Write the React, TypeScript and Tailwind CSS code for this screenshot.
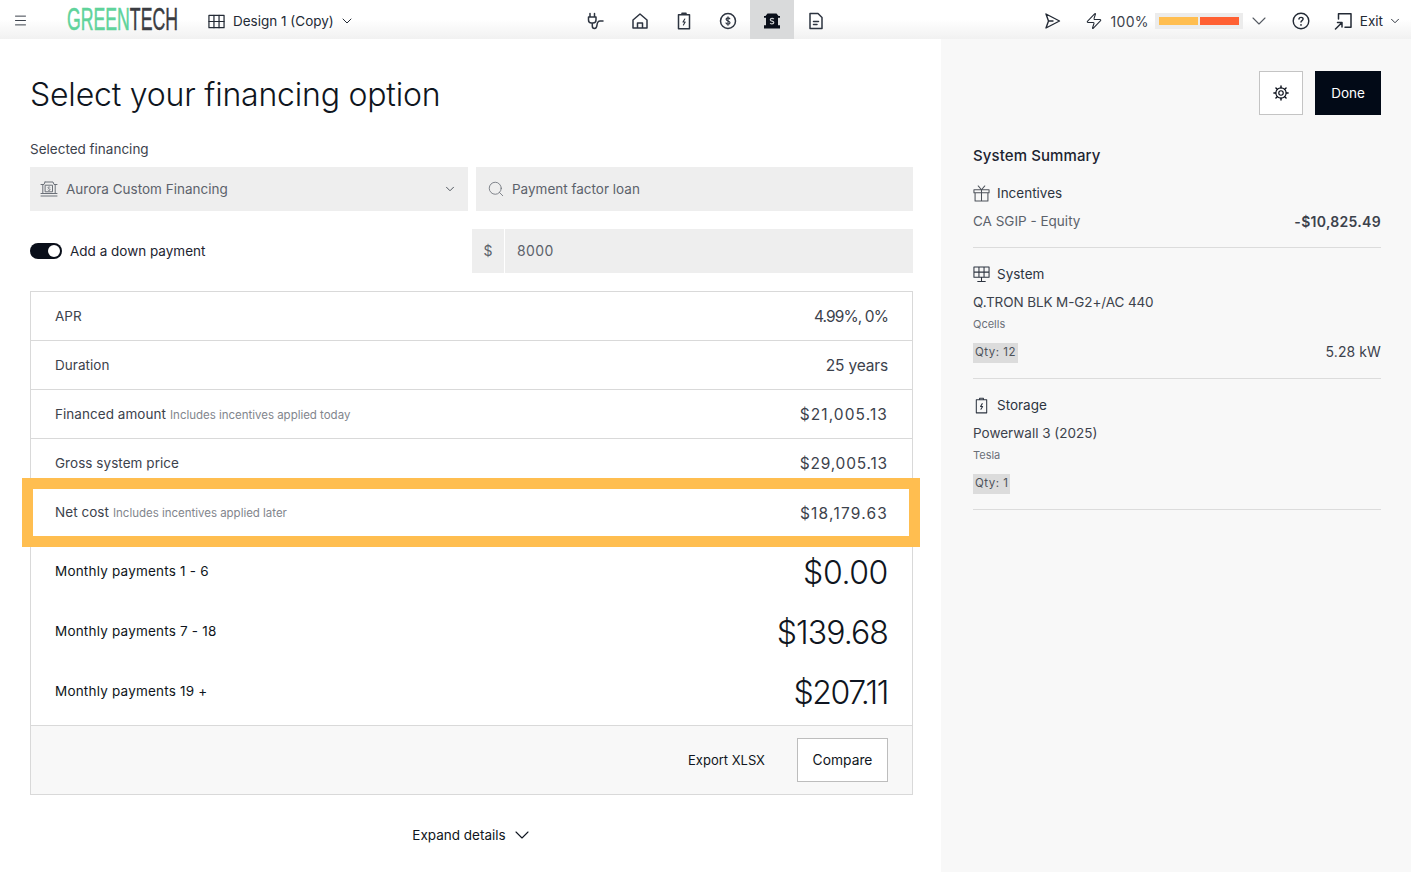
import React from "react";
import { Menu, ChevronDown, Search, Zap } from "lucide-react";

const C = "#0a0f1a";

function Ico({ children, size = 18, className = "" }: { children: React.ReactNode; size?: number; className?: string }) {
  return (
    <svg width={size} height={size} viewBox="0 0 18 18" fill="none" stroke="currentColor" strokeWidth="1.2" strokeLinecap="round" strokeLinejoin="round" className={`shrink-0 ${className}`}>
      {children}
    </svg>
  );
}
const Grid = ({ size = 18 }: { size?: number }) => (
  <Ico size={size}><rect x="1" y="2.500" width="16" height="13" strokeWidth="1.300" /><path d="M1 9h16M6.300 2.500v13M11.700 2.500v13" strokeWidth="1.300" /></Ico>
);
const Plug = () => (
  <Ico><path d="M3 1.500v3.500M7.500 1.500v3.500M1.500 5h7.500v3a3 3 0 0 1-3 3H4.500a3 3 0 0 1-3-3zM5.300 11v3c0 1.500 1 2.500 2.200 2.500S9.800 15 10 13c.3-2.500 1.200-4 3-4h3" strokeWidth="1.500" /></Ico>
);
const Home = () => (
  <Ico><path d="M2 8 9 2l7 6v8H2zM6.500 16v-5h5v5" strokeWidth="1.500" /></Ico>
);
const Battery = ({ size = 18, w = 1.500 }: { size?: number; w?: number }) => (
  <Ico size={size}><path d="M7 2.800V1.300h4v1.500M3.500 2.800h11v14h-11z" strokeWidth={w} /><path d="M9.800 7 8 10h2.200l-1.800 3" strokeWidth="1.100" /></Ico>
);
const Dollar = () => (
  <Ico><circle cx="9" cy="9" r="7.500" strokeWidth="1.500" /><path d="M10.800 6.800C10.400 6 9.800 5.800 9 5.800c-1 0-1.900.5-1.900 1.500 0 2.100 3.900 1.200 3.900 3.400 0 1-.9 1.500-2 1.500-.9 0-1.600-.4-2-1.200M9 4.800v8.400" strokeWidth="1.200" /></Ico>
);
const BankSolid = () => (
  <svg width="18" height="18" viewBox="0 0 18 18">
    <path d="M4.500 1.500h9L15.500 4H17v1.800h-2v7.400h2V16.500H1v-3.300h2V5.800H1V4h1.500z" fill={C} />
    <path d="M10.800 7.200C10.400 6.600 9.800 6.400 9 6.400c-1 0-1.700.5-1.700 1.300 0 1.800 3.500 1.100 3.500 2.900 0 .8-.8 1.300-1.800 1.300-.8 0-1.400-.3-1.800-.9" stroke="#c8cacc" strokeWidth="1.200" fill="none" />
  </svg>
);
const Bank = () => (
  <Ico size={18} className="text-[#6b7078]">
    <path d="M5 2h8l1 2.500h3M5 2 4 4.500H1M2.800 4.500v9M15.200 4.500v9M1 13.500h3.500M13.500 13.500H17M1 16h16M4.500 13.500h9" strokeWidth="1" />
    <rect x="5.500" y="5.200" width="7" height="6.600" strokeWidth="1" />
    <path d="M10 7.300C9.700 7 9.300 6.900 9 6.900c-.6 0-1 .3-1 .9 0 1 2 .7 2 1.800 0 .6-.5.900-1 .9-.4 0-.8-.2-1-.5" strokeWidth=".9" />
  </Ico>
);
const FileDoc = () => (
  <Ico><path d="M3 1.500h8l4 4v11H3z" strokeWidth="1.500" /><path d="M6.500 9.500h5M6.500 12.500h3.500" strokeWidth="1.500" /></Ico>
);
const Send = () => (
  <Ico><path d="M3 2 16.500 9 3 16 5.500 9zM5.500 9H10" strokeWidth="1.400" /></Ico>
);
const Help = () => (
  <Ico size={18}><circle cx="9" cy="9" r="7.800" strokeWidth="1.400" /><path d="M6.900 7c.2-1 1-1.600 2.100-1.600 1.200 0 2.100.7 2.100 1.700 0 1.500-2.100 1.500-2.100 3" strokeWidth="1.400" /><path d="M9 12.800v.2" strokeWidth="1.700" /></Ico>
);
const ExitIcon = () => (
  <Ico><path d="M4.500 7V1.800h12.500V15.200h-6" strokeWidth="1.500" /><path d="M1.500 17 8 10.500M3.500 10.500H8V15" strokeWidth="1.500" /></Ico>
);
const Gift = () => (
  <Ico size={17} className="text-[#4d525a]">
    <path d="M1 5h16v3.200H1zM2.200 8.200V17h13.600V8.200M9 5v12M5.500 1 9 5l3.500-4" strokeWidth="1.100" />
  </Ico>
);
const Gear = () => (
  <Ico size={16}>
    <circle cx="9" cy="9" r="5.800" strokeWidth="1.300" />
    <circle cx="9" cy="9" r="2.500" strokeWidth="1.300" />
    <path d="M9 1v2M9 15v2M1 9h2M15 9h2M3.300 3.300 4.800 4.800M13.200 13.200l1.500 1.500M3.300 14.700 4.800 13.200M13.200 4.800l1.500-1.500" strokeWidth="1.600" />
  </Ico>
);
const SolarPanel = () => (
  <Ico size={17} className="text-[#2d3440]">
    <path d="M1 1h16v11H1zM1 6.500h16M6.300 1v11M11.700 1v11M9 12v4.500M5 16.500h8" strokeWidth="1.100" />
  </Ico>
);

function TopIcon({ children, active }: { children: React.ReactNode; active?: boolean }) {
  return <div className={`w-11 h-[39px] pt-[2px] flex items-center justify-center text-[#2d3440] ${active ? "bg-[#d9dadb]" : ""}`}>{children}</div>;
}

function Label({ label, note }: { label: string; note?: string }) {
  return (
    <div className="flex items-baseline gap-1 text-[13.5px] text-[#3c424c] tracking-[0.05px]">
      <span>{label}</span>
      {note && <span className="text-[11.5px] text-[#82868d] tracking-[-0.02px]">{note}</span>}
    </div>
  );
}

function Row({ label, note, value, track = "tracking-[1.1px]", line = true }: { label: string; note?: string; value: string; track?: string; line?: boolean }) {
  return (
    <div className={`h-[49px] shrink-0 px-6 flex items-center justify-between ${line ? "border-b border-[#d9d9d9]" : ""}`}>
      <Label label={label} note={note} />
      <div className={`mt-[2px] text-[15.5px] text-[#3c424c] ${track}`}>{value}</div>
    </div>
  );
}

function Pay({ label, value, track = "tracking-[-0.9px]" }: { label: string; value: string; track?: string }) {
  return (
    <div className="h-[60px] px-6 flex items-center justify-between">
      <span className="mb-1 text-[13.5px] text-[#0f1520] tracking-[0.2px]">{label}</span>
      <span className={`text-[32px] font-light text-[#0f1520] ${track}`}>{value}</span>
    </div>
  );
}

function Qty({ children }: { children: React.ReactNode }) {
  return <span className="inline-flex h-5 items-center px-[2px] bg-[#dcdcdc] text-[11.5px] text-[#4d525a] tracking-[0.5px]">{children}</span>;
}

export default function App() {
  return (
    <div className="relative w-full h-[872px] overflow-hidden bg-white flex flex-col font-['Inter',sans-serif]" style={{ color: C }}>
      <header className="h-[39px] shrink-0 flex items-center bg-gradient-to-b from-white via-white to-[#f1f1f1]">
        <div className="ml-[13px] mt-[2px] w-[15px] shrink-0 text-[#3c424c]"><Menu size={15} strokeWidth={1.6} /></div>
        <div className="ml-[39px] w-[111px] shrink-0">
          <div className="origin-left scale-x-[0.57] whitespace-nowrap font-['Liberation_Sans',sans-serif] text-[31px] leading-none [-webkit-text-stroke:0.5px_currentColor]">
            <span className="text-[#5fd39b]">GREEN</span><span className="text-[#3a3d42]">TECH</span>
          </div>
        </div>
        <div className="ml-[30px] mt-[3px] w-[142px] flex items-center gap-2 text-[13.5px] text-[#232a35] shrink-0 whitespace-nowrap">
          <Grid size={17} />
          <span>Design 1 (Copy)</span>
          <ChevronDown size={16} strokeWidth={1.5} className="-ml-[3px] shrink-0" />
        </div>
        <div className="ml-[224px] flex items-center shrink-0">
          <TopIcon><Plug /></TopIcon>
          <TopIcon><Home /></TopIcon>
          <TopIcon><Battery /></TopIcon>
          <TopIcon><Dollar /></TopIcon>
          <TopIcon active><BankSolid /></TopIcon>
          <TopIcon><FileDoc /></TopIcon>
        </div>
        <div className="ml-auto mt-[3px] flex items-center text-[#232a35] shrink-0 pr-[9px]">
          <Send />
          <Zap size={18} strokeWidth={1.4} className="ml-6" />
          <span className="ml-2 text-[14px] tracking-[0.3px] text-[#3c424c]">100%</span>
          <div className="ml-[6px] w-[88px] h-4 bg-[#ececec] flex items-center gap-[2px] px-1">
            <div className="w-10 h-2 bg-[#ffbe50]" />
            <div className="w-10 h-2 bg-[#ff6033]" />
          </div>
          <ChevronDown size={24} strokeWidth={1.1} className="ml-1 -mr-[3px] text-[#555a62]" />
          <div className="ml-6"><Help /></div>
          <div className="ml-6"><ExitIcon /></div>
          <span className="ml-2 text-[13.5px]">Exit</span>
          <ChevronDown size={14} strokeWidth={1.6} className="ml-[5px]" />
        </div>
      </header>

      <div className="flex-1 flex min-h-0">
        <main className="w-[941px] shrink-0 pl-[30px] pr-7 flex flex-col">
          <h1 className="mt-[35px] h-[42px] text-[32px] leading-[42px] font-light text-[#0f1520] tracking-[-0.2px]">Select your financing option</h1>
          <div className="mt-[25px] h-4 text-[13.5px] leading-4 text-[#3c424c]">Selected financing</div>

          <div className="mt-[10px] flex gap-2 h-11 text-[13.5px] text-[#5c626b]">
            <div className="w-[438px] bg-[#eeeeee] pl-[10px] pr-4 flex items-center">
              <Bank />
              <span className="ml-2">Aurora Custom Financing</span>
              <ChevronDown size={14} strokeWidth={1.5} className="ml-auto text-[#3c424c] -mr-[5px]" />
            </div>
            <div className="flex-1 bg-[#eeeeee] pl-[11px] flex items-center">
              <Search size={18} strokeWidth={1.1} className="text-[#6b7078]" />
              <span className="ml-[7px]">Payment factor loan</span>
            </div>
          </div>

          <div className="mt-[18px] h-11 flex items-center">
            <div className="w-8 h-4 rounded-full bg-[#0a0f1a] relative shrink-0">
              <div className="absolute right-[2px] top-[2px] w-3 h-3 rounded-full bg-white" />
            </div>
            <span className="ml-2 text-[13.5px] text-[#1d2430]">Add a down payment</span>
            <div className="ml-auto w-[441px] h-11 flex gap-px text-[14px] text-[#5c626b]">
              <div className="w-8 pb-[2px] bg-[#eeeeee] flex items-center justify-center">$</div>
              <div className="flex-1 pb-[2px] bg-[#eeeeee] pl-3 flex items-center tracking-[0.4px]">8000</div>
            </div>
          </div>

          <section className="mt-[18px] h-[504px] border border-[#d9d9d9] flex flex-col">
            <Row label="APR" value="4.99%, 0%" track="tracking-[-0.9px]" />
            <Row label="Duration" value="25 years" track="tracking-[-0.15px]" />
            <Row label="Financed amount" note="Includes incentives applied today" value="$21,005.13" />
            <Row label="Gross system price" value="$29,005.13" track="tracking-[0.8px]" />
            <Row label="Net cost" note="Includes incentives applied later" value="$18,179.63" line={false} track="tracking-[1.2px]" />
            <div className="mt-[6px]">
              <Pay label="Monthly payments 1 - 6" value="$0.00" track="tracking-[-0.4px]" />
              <Pay label="Monthly payments 7 - 18" value="$139.68" />
              <Pay label="Monthly payments 19 +" value="$207.11" track="tracking-[-1.4px]" />
            </div>
            <div className="mt-auto h-[69px] border-t border-[#d9d9d9] bg-[#f8f8f8] pr-6 flex items-center justify-end">
              <span className="mt-[2px] text-[13px] text-[#0f1520]">Export XLSX</span>
              <button className="ml-8 w-[91px] h-11 border border-[#bdbdbd] bg-white text-[13.8px] text-[#0f1520]">Compare</button>
            </div>
          </section>

          <div className="mt-[30px] flex items-center justify-center gap-[7px] text-[13.5px] text-[#0f1520]">
            <span>Expand details</span>
            <ChevronDown size={24} strokeWidth={1.1} className="-my-1 -ml-[3px] -mr-[3px]" />
          </div>
        </main>

        <aside className="flex-1 bg-[#f8f8f8] pl-8 pr-[30px]">
          <div className="mt-8 flex justify-end gap-3">
            <button className="w-11 h-11 border border-[#c4c4c4] bg-white flex items-center justify-center"><Gear /></button>
            <button className="w-[66px] h-11 bg-[#020a17] text-white text-[13.5px]">Done</button>
          </div>
          <h2 className="mt-[31px] text-[15px] leading-5 text-[#1d2430] font-medium tracking-[0.1px]">System Summary</h2>

          <div className="mt-[17px] flex items-center gap-[7px] h-5 text-[13.5px] text-[#2d3440]"><Gift /><span>Incentives</span></div>
          <div className="mt-2 flex justify-between items-center h-5 text-[13.5px] text-[#5c626b]">
            <span>CA SGIP - Equity</span>
            <span className="text-[14px] font-semibold text-[#3c424c] tracking-[0.3px]">-$10,825.49</span>
          </div>
          <div className="mt-4 border-t border-[#dcdcdc]" />

          <div className="mt-4 flex items-center gap-[7px] h-5 text-[13.5px] text-[#2d3440]"><SolarPanel /><span>System</span></div>
          <div className="mt-2 h-5 text-[13.5px] leading-5 text-[#3c424c] tracking-[-0.1px]">Q.TRON BLK M-G2+/AC 440</div>
          <div className="mt-[5px] h-[14px] text-[11px] leading-[14px] text-[#6b7078]">Qcells</div>
          <div className="mt-3 flex justify-between items-center h-5">
            <Qty>Qty: 12</Qty>
            <span className="mb-1 text-[14px] text-[#3c424c] tracking-[0.1px]">5.28 kW</span>
          </div>
          <div className="mt-[15px] border-t border-[#dcdcdc]" />

          <div className="mt-4 flex items-center gap-[7px] h-5 text-[13.5px] text-[#2d3440]"><Battery size={17} w={1.100} /><span>Storage</span></div>
          <div className="mt-2 h-5 text-[13.5px] leading-5 text-[#3c424c]">Powerwall 3 (2025)</div>
          <div className="mt-[5px] h-[14px] text-[11px] leading-[14px] text-[#6b7078]">Tesla</div>
          <div className="mt-3 h-5 flex"><Qty>Qty: 1</Qty></div>
          <div className="mt-[15px] border-t border-[#dcdcdc]" />
        </aside>
      </div>

      <div className="absolute left-[22px] top-[478px] w-[898px] h-[69px] border-[11px] border-[#ffbe50] pointer-events-none" />
    </div>
  );
}
